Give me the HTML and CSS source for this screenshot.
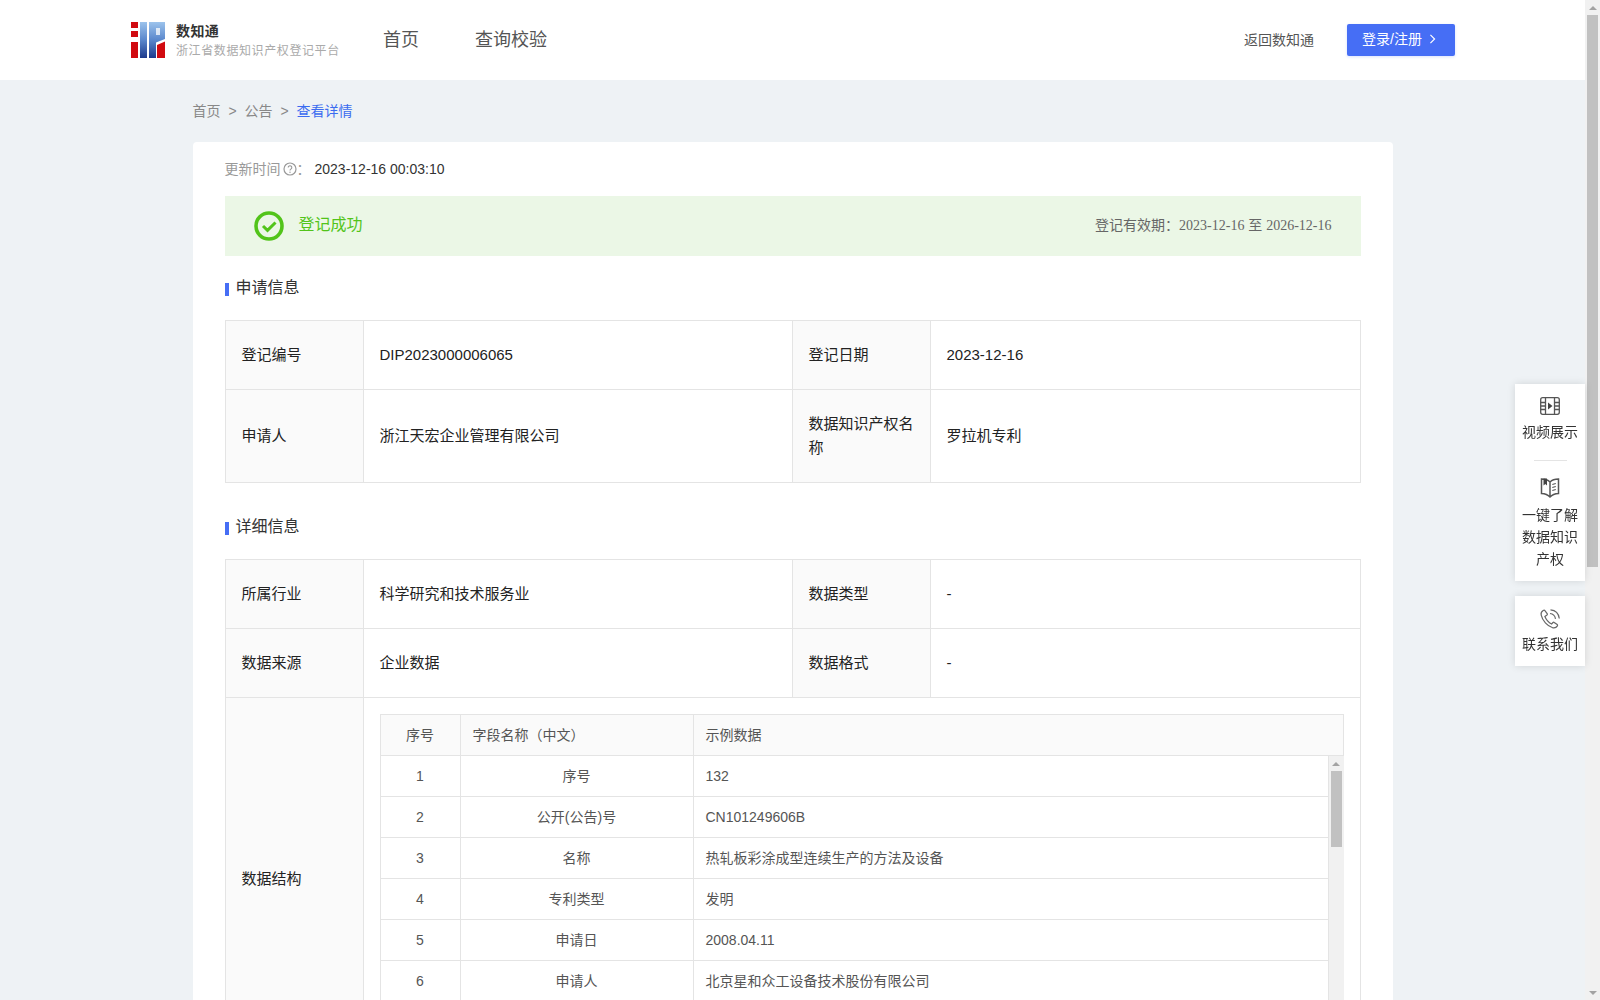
FILE: index.html
```html
<!DOCTYPE html>
<html lang="zh-CN">
<head>
<meta charset="utf-8">
<title>数知通 - 查看详情</title>
<link rel="stylesheet" href="styles.css">
</head>
<body>
<div class="viewport">
<header class="topbar">
  <div class="topbar-inner">
    <a class="brand">
      <svg class="logo" viewBox="0 0 34 36" width="34" height="36">
        <defs>
          <linearGradient id="lg" x1="0" y1="0" x2="0" y2="1">
            <stop offset="0" stop-color="#9cc3ec"/>
            <stop offset=".5" stop-color="#5a87cc"/>
            <stop offset="1" stop-color="#1d3a8c"/>
          </linearGradient>
        </defs>
        <path fill="#d10a10" d="M0 0h7v6H0zM0 9h7v6H0zM0 20h7v16H0z"/>
        <path fill="url(#lg)" d="M9 0h7v36H9zM18 0h16v17l-9 3.500V36h-7z"/>
        <path fill="#fff" d="M25 6h4v7h-4z" opacity=".75"/>
        <path fill="#d10a10" d="M26 23l8-3.500V36h-8z"/>
      </svg>
      <span class="brand-text">
        <strong class="brand-name">数知通</strong>
        <span class="brand-sub">浙江省数据知识产权登记平台</span>
      </span>
    </a>
    <nav class="nav">
      <a>首页</a>
      <a>查询校验</a>
    </nav>
    <div class="top-actions">
      <a class="back-link">返回数知通</a>
      <button class="login-btn"><span>登录/注册</span>
        <svg viewBox="0 0 8 12" width="7" height="10"><path d="M1.500 1l5 5-5 5" fill="none" stroke="#fff" stroke-width="1.400"/></svg>
      </button>
    </div>
  </div>
</header>

<main class="page">
  <div class="crumbs">
    <span>首页</span><i>&gt;</i><span>公告</span><i>&gt;</i><span class="current">查看详情</span>
  </div>

  <section class="card">
    <div class="update-row">
      <span class="update-label">更新时间</span>
      <svg class="help" viewBox="0 0 14 14" width="14" height="14">
        <circle cx="7" cy="7" r="6" fill="none" stroke="#999" stroke-width="1.200"/>
        <path d="M5.200 5.500a1.800 1.800 0 1 1 2.700 1.600c-.6.400-.9.700-.9 1.400" fill="none" stroke="#999" stroke-width="1.100"/>
        <circle cx="7" cy="10.300" r=".7" fill="#999"/>
      </svg>
      <span class="update-label colon">&#xFF1A;</span>
      <span class="update-value">2023-12-16 00:03:10</span>
    </div>

    <div class="status">
      <div class="status-main">
        <svg viewBox="0 0 30 30" width="30" height="30">
          <circle cx="15" cy="15" r="13" fill="none" stroke="#52c41a" stroke-width="3.600"/>
          <path d="M9 15l4.500 4.300L21.500 11.500" fill="none" stroke="#52c41a" stroke-width="3"/>
        </svg>
        <span class="status-label">登记成功</span>
      </div>
      <div class="status-date">登记有效期&#xFF1A;<em>2023-12-16</em> 至 <em>2026-12-16</em></div>
    </div>

    <h2 class="sec-title first">申请信息</h2>
    <table class="info">
      <colgroup><col class="c-l"><col class="c-v"><col class="c-l"><col></colgroup>
      <tr>
        <th>登记编号</th><td>DIP2023000006065</td>
        <th>登记日期</th><td>2023-12-16</td>
      </tr>
      <tr>
        <th>申请人</th><td>浙江天宏企业管理有限公司</td>
        <th>数据知识产权名称</th><td>罗拉机专利</td>
      </tr>
    </table>

    <h2 class="sec-title">详细信息</h2>
    <table class="info">
      <colgroup><col class="c-l"><col class="c-v"><col class="c-l"><col></colgroup>
      <tr>
        <th>所属行业</th><td>科学研究和技术服务业</td>
        <th>数据类型</th><td>-</td>
      </tr>
      <tr>
        <th>数据来源</th><td>企业数据</td>
        <th>数据格式</th><td>-</td>
      </tr>
      <tr>
        <th>数据结构</th>
        <td colspan="3" class="struct-cell">
          <table class="grid grid-head">
            <colgroup><col class="g-1"><col class="g-2"><col></colgroup>
            <tr><th class="center">序号</th><th>字段名称&#xFF08;中文&#xFF09;</th><th>示例数据</th></tr>
          </table>
          <div class="grid-body">
            <div class="grid-scroll">
              <table class="grid">
                <colgroup><col class="g-1"><col class="g-2"><col></colgroup>
                <tr><td class="center">1</td><td class="center">序号</td><td>132</td></tr>
                <tr><td class="center">2</td><td class="center">公开(公告)号</td><td>CN101249606B</td></tr>
                <tr><td class="center">3</td><td class="center">名称</td><td>热轧板彩涂成型连续生产的方法及设备</td></tr>
                <tr><td class="center">4</td><td class="center">专利类型</td><td>发明</td></tr>
                <tr><td class="center">5</td><td class="center">申请日</td><td>2008.04.11</td></tr>
                <tr><td class="center">6</td><td class="center">申请人</td><td>北京星和众工设备技术股份有限公司</td></tr>
              </table>
            </div>
            <div class="sbar sbar-inner">
              <div class="sbar-up"></div>
              <div class="sbar-track"><div class="sbar-thumb"></div></div>
              <div class="sbar-down"></div>
            </div>
          </div>
        </td>
      </tr>
    </table>
  </section>
</main>
</div>

<div class="sbar sbar-page">
  <div class="sbar-up"></div>
  <div class="sbar-track"><div class="sbar-thumb"></div></div>
  <div class="sbar-down"></div>
</div>

<aside class="float-tools">
  <div class="tool-box">
    <a class="tool">
      <svg viewBox="0 0 22 20" width="22" height="20" fill="none" stroke="#555" stroke-width="1.300">
        <rect x="1.700" y="1.700" width="18.600" height="16.600" rx="2"/>
        <path d="M6.500 1.700v16.600M15.500 1.700v16.600M1.700 6.500h4.800M1.700 10h4.800M1.700 13.500h4.800M15.500 6.500h4.800M15.500 10h4.800M15.500 13.500h4.800"/>
        <path d="M9 6.500l4.500 3.500L9 13.500z" fill="#444" stroke="none"/>
      </svg>
      <span>视频展示</span>
    </a>
    <hr class="tool-sep">
    <a class="tool">
      <svg viewBox="0 0 22 22" width="22" height="22" fill="none" stroke="#555" stroke-width="1.500">
        <path d="M11 5C9 3 6 2 2.500 2v14.500c3.500.2 6.500 1.400 8.500 3.500 2-2.100 5-3.300 8.500-3.500V2C16 2 13 3 11 5zM11 5v15"/>
        <path d="M4.500 1.500h3.500v7l-1.700-1.500-1.800 1.500z" fill="#444" stroke="none"/>
        <path d="M13.300 7.500l3.500-1M13.300 10.500l3.500-1M13.300 13.500l3.500-1" stroke-width="1.200"/>
      </svg>
      <span>一键了解数据知识产权</span>
    </a>
  </div>
  <div class="tool-box contact">
    <a class="tool">
      <svg viewBox="0 0 22 22" width="22" height="22" fill="none" stroke="#666" stroke-width="1.200">
        <path d="M4.200 2.500c-1.600.9-2.500 2.500-2 4.600 1.300 5.500 6 11 11.500 12.700 2 .5 3.700-.3 4.700-1.900.3-.5.200-1-.2-1.300l-3-2.200c-.4-.3-.9-.2-1.200.1l-1.400 1.500c-3-1.500-5.500-4.500-6.700-7.500L8 7c.4-.3.500-.8.300-1.200L6.100 2.800c-.4-.5-1.200-.7-1.900-.3z"/>
        <path d="M11 5.500c3 .3 5 2.300 5.500 5.300M11.500 1.800c4.800.4 8.200 3.800 8.800 8.700"/>
      </svg>
      <span>联系我们</span>
    </a>
  </div>
</aside>
</body>
</html>
```
FILE: styles.css
```css
* { box-sizing: border-box; }

body {
  margin: 0;
  height: 100vh;
  overflow: hidden;
  display: flex;
  background: #eef2f5;
  color: #333;
  font: 14px/22px "Liberation Sans", "Noto Sans CJK SC", sans-serif;
}
.viewport { flex: 1; min-width: 0; height: 100%; overflow: hidden; }

/* scrollbars */
.sbar {
  flex: none;
  width: 15px;
  background: #f1f1f1;
  display: flex;
  flex-direction: column;
}
.sbar-page { height: 100%; }
.sbar-up, .sbar-down {
  flex: none;
  height: 15px;
  display: flex;
  align-items: center;
  justify-content: center;
}
.sbar-up::before, .sbar-down::before {
  content: "";
  border-left: 4px solid transparent;
  border-right: 4px solid transparent;
}
.sbar-up::before { border-bottom: 4px solid #a3a3a3; }
.sbar-down::before { border-top: 4px solid #a3a3a3; }
.sbar-track { flex: 1; min-height: 0; padding: 0 2px; }
.sbar-thumb { height: 552px; background: #c1c1c1; }
.sbar-inner .sbar-thumb { height: 76px; }

.topbar { height: 80px; background: #fff; }
.topbar-inner {
  width: 1324px;
  height: 100%;
  margin-left: 131px;
  display: flex;
  align-items: center;
}
.brand { display: flex; align-items: center; width: 252px; }
.logo { display: block; flex: none; }
.brand-text { margin-left: 11px; display: flex; flex-direction: column; gap: 1px; }
.brand-name { font-size: 14px; line-height: 20px; color: #333; letter-spacing: .4px; }
.brand-sub { font-size: 12px; line-height: 18px; color: #aaa; letter-spacing: .6px; white-space: nowrap; }
.nav { display: flex; gap: 56px; font-size: 18px; color: #555; }
.top-actions { margin-left: auto; display: flex; align-items: center; gap: 33px; }
.back-link { color: #555; }
.login-btn {
  width: 108px;
  height: 32px;
  border: 0;
  border-radius: 2px;
  padding: 0 0 2px 0;
  background: #466ef5;
  color: #fff;
  font: inherit;
  box-shadow: 0 1px 3px rgba(70, 110, 245, .2);
  display: flex;
  align-items: center;
  justify-content: center;
  gap: 7px;
}
.login-btn span { margin-left: -4px; }

.page { width: 1200px; margin: 0 auto; }
.crumbs {
  height: 62px;
  padding-bottom: 1px;
  display: flex;
  align-items: center;
  color: #888;
}
.crumbs i { font-style: normal; width: 24px; text-align: center; }
.crumbs .current { color: #3b6cf0; }

.card {
  background: #fff;
  border-radius: 4px 4px 0 0;
  padding: 16px 32px 32px;
}
.update-row { display: flex; align-items: center; height: 22px; }
.update-label { color: #999; }
.help { margin-left: 2px; }
.colon { width: 18px; text-align: left; }
.update-value { color: #333; }

.status {
  margin-top: 16px;
  height: 60px;
  background: #ebf7e6;
  display: flex;
  align-items: center;
  justify-content: space-between;
  padding: 0 29px;
}
.status-main { display: flex; align-items: center; gap: 15px; color: #52c41a; font-size: 16px; }
.status-label { padding-bottom: 2px; }
.status-date { color: #666; padding-bottom: 2px; }
.status-date em { font-family: "Liberation Serif", serif; font-style: normal; }

.sec-title {
  margin: 33px 0 21px;
  height: 22px;
  font-size: 16px;
  font-weight: 400;
  line-height: 22px;
  color: #333;
  display: flex;
  align-items: center;
  gap: 7px;
}
.sec-title.first { margin-top: 21px; }
.sec-title::before {
  content: "";
  width: 4px;
  height: 13px;
  background: #466ef5;
  margin-top: 3px;
}

.info {
  width: 1136px;
  border-collapse: collapse;
  table-layout: fixed;
  border: 1px solid #e4e4e4;
}
.c-l { width: 138px; }
.c-v { width: 429px; }
.info > tbody > tr > th,
.info > tbody > tr > td {
  border: 1px solid #e4e4e4;
  padding: 22px 16px;
  font-size: 15px;
  line-height: 24px;
  color: #222;
  font-weight: 400;
  text-align: left;
}
.info > tbody > tr > th { background: #fafafa; }
.info > tbody > tr > td.struct-cell { padding: 16px; }

.grid {
  width: 100%;
  border-collapse: collapse;
  table-layout: fixed;
  color: #555;
  font-size: 14px;
}
.g-1 { width: 80px; }
.g-2 { width: 233px; }
.grid th, .grid td {
  height: 41px;
  border: 1px solid #e4e4e4;
  padding: 0 12px;
  font-weight: 400;
  text-align: left;
  line-height: 22px;
}
.grid th { background: #fafafa; }
.grid .center { text-align: center; }
.grid-body { display: flex; height: 288px; }
.grid-scroll { flex: 1; min-width: 0; overflow: hidden; }
.grid-scroll .grid tr:first-child td { border-top: 0; height: 40px; }

.float-tools {
  position: fixed;
  right: 15px;
  top: 384px;
  width: 70px;
  display: flex;
  flex-direction: column;
  gap: 15px;
}
.tool-box {
  background: #fff;
  box-shadow: 0 0 8px rgba(0, 0, 0, .12);
  padding: 12px 6px 11px;
  color: #333;
  text-align: center;
}
.tool { display: flex; flex-direction: column; align-items: center; gap: 5px; }
.tool svg { display: block; }
.tool-sep { width: 33px; margin: 17px auto 16px; border: 0; border-top: 1px solid #e4e4e4; }
.contact .tool { gap: 3px; }
.contact { padding-bottom: 11px; }
```
